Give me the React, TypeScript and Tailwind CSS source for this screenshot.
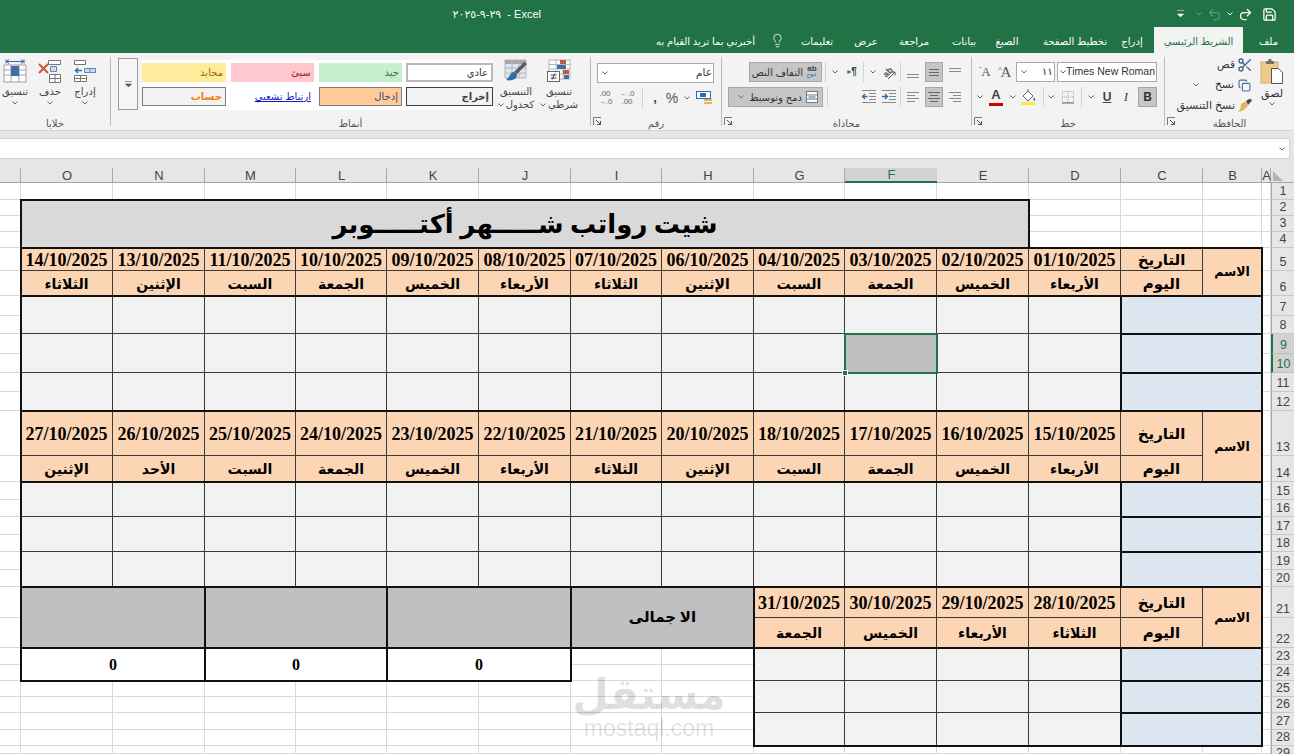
import { Scissors, Copy, Lightbulb, Save, Undo2, Redo2 } from "lucide-react";
import type { ReactNode } from "react";

const Chev = ({ color = "#666" }: { color?: string }) => (
  <svg width="6" height="4" viewBox="0 0 6 4" className="shrink-0">
    <path d="M.5.5 3 3 5.500.5" fill="none" stroke={color} />
  </svg>
);

const Sep = () => <div className="h-[20px] w-px shrink-0 bg-[#d2d2d2]" />;

const Lines = ({ rows, color = "#8a8a8a" }: { rows: number[][]; color?: string }) => (
  <svg width="14" height="14" viewBox="0 0 14 14">
    {rows.map(([x1, x2, y]) => (
      <path key={`${x1}-${y}`} d={`M${x1} ${y}.5H${x2}`} stroke={color} />
    ))}
  </svg>
);

const Launcher = () => (
  <svg width="9" height="9" viewBox="0 0 9 9" className="absolute left-[2px] top-[3px]">
    <path d="M.5 8V.5H8" fill="none" stroke="#777" />
    <path d="M3 3 7.500 7.500M7.500 4v3.500H4" fill="none" stroke="#555" />
  </svg>
);

const Group = ({ w, label, launcher, sep = true, children }: { w: string; label: string; launcher?: boolean; sep?: boolean; children: ReactNode }) => (
  <div className={`flex h-[77px] shrink-0 ${w}`}>
    <div className="flex min-w-0 flex-1 flex-col">
      <div className="h-[61px]">{children}</div>
      <div className="relative flex h-[16px] items-center justify-center pt-[2px] text-[10px] text-[#555]">
        {label}
        {launcher && <Launcher />}
      </div>
    </div>
    {sep && <div className="my-[4px] w-px bg-[#bdbdbd]" />}
  </div>
);

const GridIcon = ({ children }: { children?: ReactNode }) => (
  <svg width="24" height="24" viewBox="0 0 24 24">
    {children}
  </svg>
);

const Clipboard = () => (
  <div className="flex h-[61px] items-start">
    <div className="mr-[4px] flex w-[36px] flex-col items-center pt-[6px]">
      <svg width="24" height="25" viewBox="0 0 24 25">
        <rect x="1" y="3" width="17" height="21" fill="#edcb8a" stroke="#d3ad66" />
        <path d="M6 5V2h2.500V0h3v2H14v3z" fill="#6f6f6f" />
        <path d="M11.500 9.500h7l4 4v11h-11z" fill="#fff" stroke="#555" />
      </svg>
      <span className="mt-[2px] text-[11px] leading-[14px] text-[#333]">لصق</span>
      <span className="mt-[2px]"><Chev /></span>
    </div>
    <div className="mr-[1px] flex flex-col pt-[2px] text-[10.5px] text-[#333]">
      <div className="flex h-[20px] items-center gap-[2px]">
        <Scissors size={16} color="#48618c" />
        <span>قص</span>
      </div>
      <div className="flex h-[20px] items-center gap-[4px] pr-[2px]">
        <Copy size={13} color="#4a6c9b" />
        <span>نسخ</span>
        <span className="mr-[12px]"><Chev /></span>
      </div>
      <div className="flex h-[20px] items-center gap-[2px]">
        <svg width="16" height="15" viewBox="0 0 16 15">
          <path d="M9 3l4-2.500 2 2L11 7z" fill="#4a4a4a" />
          <path d="M8 3.500 11 7c-1 3-5 6-10 7 2-2 3-5 3-8z" fill="#e2b35c" />
        </svg>
        <span className="whitespace-nowrap text-[11px]">نسخ التنسيق</span>
      </div>
    </div>
  </div>
);

const Combo = ({ w, text, font }: { w: string; text: string; font?: boolean }) => (
  <div className={`flex h-[20px] shrink-0 items-center justify-between border border-[#ababab] bg-white pl-[4px] ${w}`}>
    <span dir={font ? "ltr" : "rtl"} className="whitespace-nowrap pr-[1px] text-[10.5px] text-[#333]">{text}</span>
    <Chev />
  </div>
);

const FontGroup = () => (
  <div className="flex flex-col gap-[5px] pt-[9px]">
    <div className="mr-[7px] flex items-center">
      <Combo w="w-[100px]" text="Times New Roman" font />
      <div className="mr-[2px]"><Combo w="w-[39px]" text="١١" /></div>
      <span className="relative mr-[2px] w-[16px] text-center font-['Liberation_Serif'] text-[15px] leading-[20px] text-[#555]">A<span className="absolute left-[0px] top-[-2px] font-['Liberation_Sans'] text-[8px] text-[#2a6fb0]">^</span></span>
      <span className="relative mr-[5px] w-[14px] text-center font-['Liberation_Serif'] text-[13px] leading-[20px] text-[#555]">A<span className="absolute left-0 top-[-2px] font-['Liberation_Sans'] text-[8px] text-[#2a6fb0]">ˇ</span></span>
    </div>
    <div className="mr-[7px] flex h-[20px] items-center">
      <span className="w-[19px] border border-[#a6a6a6] bg-[#c6c6c6] text-center font-['Liberation_Sans'] text-[12px] font-bold leading-[18px] text-[#333]">B</span>
      <span className="mr-[4px] w-[16px] text-center font-['Liberation_Serif'] text-[13px] italic text-[#444]">I</span>
      <span className="mr-[3px] w-[16px] text-center font-['Liberation_Sans'] text-[12px] font-bold text-[#444] underline">U</span>
      <span className="mr-[4px] flex w-[8px] justify-center"><Chev /></span>
      <div className="mr-[5px]"><Sep /></div>
      <svg className="mr-[5px]" width="16" height="16" viewBox="0 0 16 16">
        <rect x="2.500" y="2.500" width="11" height="11" fill="none" stroke="#aaa" strokeDasharray="1 1" />
        <path d="M8 2v12M2 8h12" stroke="#aaa" strokeDasharray="1 1" />
        <path d="M2 14h12" stroke="#666" />
      </svg>
      <span className="mr-[5px] flex w-[8px] justify-center"><Chev /></span>
      <div className="mr-[3px]"><Sep /></div>
      <svg className="mr-[6px]" width="18" height="18" viewBox="0 0 18 18">
        <path d="M4 8l5-5 5 5-5 5z" fill="#fff" stroke="#666" />
        <path d="M9 3V1" stroke="#666" />
        <path d="M15 9c1 2 1.500 3 .5 4-1 0-1.500-2-.5-4z" fill="#555" />
        <rect x="2" y="14" width="14" height="3" fill="#ffe93b" />
      </svg>
      <span className="mr-[2px] flex w-[8px] justify-center"><Chev /></span>
      <div className="relative mr-[4px] flex h-[18px] w-[18px] justify-center">
        <span className="font-['Liberation_Sans'] text-[13px] font-bold leading-[14px] text-[#444]">A</span>
        <div className="absolute bottom-0 h-[3px] w-[14px] bg-[#d00000]" />
      </div>
      <span className="mr-[3px] flex w-[8px] justify-center"><Chev /></span>
    </div>
  </div>
);

const top3 = [[1, 13, 3], [1, 13, 6]];
const mid3 = [[2, 12, 4], [2, 12, 7], [2, 12, 10]];
const bot3 = [[1, 13, 9], [1, 13, 12]];
const leftL = [[1, 13, 2], [1, 9, 5], [1, 13, 8], [1, 9, 11]];
const centerL = [[1, 13, 2], [3, 11, 5], [1, 13, 8], [3, 11, 11]];
const rightL = [[1, 13, 2], [5, 13, 5], [1, 13, 8], [5, 13, 11]];

const Indent = ({ right }: { right?: boolean }) => (
  <svg width="16" height="14" viewBox="0 0 16 14">
    <path d="M8 3.500h7M8 6.500h7M8 9.500h7M1 12.500h14M1 .5h14" stroke="#8a8a8a" />
    <path d={right ? "M1 6.500h5M4 4l2.500 2.500L4 9" : "M6.500 6.500h-5M4 4 1.500 6.500 4 9"} fill="none" stroke="#2a6fb0" strokeWidth="1.300" />
  </svg>
);

const AlignGroup = () => (
  <div className="flex flex-col gap-[5px] pt-[9px]">
    <div className="flex h-[20px] items-center">
      <span className="mr-[7px] flex w-[18px] justify-center"><Lines rows={top3} /></span>
      <span className="mr-[3px] flex h-[20px] w-[18px] items-center justify-center border border-[#a6a6a6] bg-[#c6c6c6]"><Lines rows={mid3} color="#666" /></span>
      <span className="mr-[3px] flex w-[18px] justify-center"><Lines rows={bot3} /></span>
      <div className="mr-[3px]"><Sep /></div>
      <span className="relative mr-[4px] flex h-[16px] w-[16px] items-center justify-center">
        <span className="-rotate-45 text-[9px] font-bold leading-none text-[#555]">ab</span>
        <svg className="absolute inset-0" width="16" height="16" viewBox="0 0 16 16">
          <path d="M8 15 15 8M11.500 8H15v3.500" fill="none" stroke="#555" />
        </svg>
      </span>
      <span className="mr-[3px] flex w-[8px] justify-center"><Chev /></span>
      <div className="mr-[5px]"><Sep /></div>
      <span dir="ltr" className="mr-[3px] flex w-[16px] items-center justify-center text-[10px] font-bold leading-none text-[#444]"><span className="text-[8px] text-[#2a6fb0]">▸</span>¶</span>
      <span className="mr-[5px] flex w-[8px] justify-center"><Chev /></span>
      <div className="mr-[5px]"><Sep /></div>
      <div className="mr-[3px] flex h-[20px] w-[73px] items-center gap-[3px] border border-[#a6a6a6] bg-[#c6c6c6] px-[3px] text-[10px] text-[#333]">
        <span dir="ltr" className="flex w-[12px] shrink-0 flex-col items-center text-[8px] font-bold leading-[7px] text-[#444]">
          ab
          <span className="font-normal text-[#2a6fb0]">c↵</span>
        </span>
        <span className="whitespace-nowrap">التفاف النص</span>
      </div>
    </div>
    <div className="flex h-[20px] items-center">
      <span className="mr-[7px] flex w-[18px] justify-center"><Lines rows={rightL} /></span>
      <span className="mr-[3px] flex h-[20px] w-[18px] items-center justify-center border border-[#a6a6a6] bg-[#c6c6c6]"><Lines rows={centerL} color="#666" /></span>
      <span className="mr-[3px] flex w-[18px] justify-center"><Lines rows={leftL} /></span>
      <div className="mr-[3px]"><Sep /></div>
      <span className="mr-[3px]"><Indent right /></span>
      <span className="mr-[4px]"><Indent /></span>
      <div className="mr-[33px]"><Sep /></div>
      <div className="mr-[4px] flex h-[20px] w-[95px] items-center gap-[3px] border border-[#a6a6a6] bg-[#c6c6c6] px-[3px] text-[10px] text-[#333]">
        <svg width="14" height="14" viewBox="0 0 14 14" className="shrink-0">
          <rect x="1.500" y="1.500" width="11" height="11" fill="#fff" stroke="#777" />
          <path d="M1 5h12M1 9h12" stroke="#777" />
          <path d="M3.500 7h7" stroke="#2a6fb0" />
        </svg>
        <span className="whitespace-nowrap">دمج وتوسيط</span>
        <span className="ml-[6px] mr-auto"><Chev /></span>
      </div>
    </div>
  </div>
);

const NumberGroup = () => (
  <div className="flex flex-col gap-[5px] pt-[10px]">
    <div className="mr-[7px]"><Combo w="w-[117px]" text="عام" /></div>
    <div className="flex h-[20px] items-center">
      <svg className="mr-[8px]" width="18" height="16" viewBox="0 0 18 16">
        <rect x="1.500" y="1.500" width="14" height="7" fill="#fff" stroke="#2a6fb0" />
        <rect x="5" y="3" width="6" height="4" fill="#2a6fb0" />
        <rect x="9" y="9" width="8" height="2" fill="#e5b45a" />
        <rect x="9" y="12" width="8" height="2" fill="#e5b45a" />
      </svg>
      <span className="mr-[4px] flex w-[8px] justify-center"><Chev /></span>
      <span className="mr-[2px] w-[18px] text-center font-['Liberation_Sans'] text-[14px] text-[#555]">%</span>
      <span className="mr-[2px] w-[12px] text-center font-['Liberation_Sans'] text-[13px] font-bold text-[#444]">,</span>
      <div className="mr-[6px]"><Sep /></div>
      <span dir="ltr" className="mr-[6px] w-[18px] text-center font-['Liberation_Sans'] text-[8px] leading-[8px] text-[#666]"><span className="text-[#2a6fb0]">←</span>.0<br />.00</span>
      <span dir="ltr" className="mr-[4px] w-[18px] text-center font-['Liberation_Sans'] text-[8px] leading-[8px] text-[#666]">.00<br /><span className="text-[#2a6fb0]">→</span>.0</span>
    </div>
  </div>
);

const StyleBox = ({ text, cls }: { text: string; cls: string }) => (
  <div className={`flex h-[19px] shrink-0 items-center px-[3px] text-[10px] ${cls}`}>{text}</div>
);

const BigBtn = ({ w, mr, label, second, children }: { w: string; mr: string; label: string; second?: string; children: ReactNode }) => (
  <div className={`flex shrink-0 flex-col items-center pt-[6px] ${w} ${mr}`}>
    {children}
    <span className="mt-[2px] whitespace-nowrap text-[10px] leading-[13px] text-[#444]">{label}</span>
    {second ? (
      <span className="flex items-center gap-[2px] whitespace-nowrap text-[10px] leading-[13px] text-[#444]">{second}<Chev /></span>
    ) : (
      <span className="mt-[3px]"><Chev /></span>
    )}
  </div>
);

const StylesGroup = () => (
  <div className="flex items-start">
    <BigBtn w="w-[44px]" mr="mr-[9px]" label="تنسيق" second="شرطي">
      <svg width="24" height="24" viewBox="0 0 24 24">
        <path d="M2 1h21v19H2zM2 5.500h21M2 10h21M2 15h21M9 1v19M16 1v19" fill="#fff" stroke="#b5b5b5" />
        <rect x="13" y="1" width="6" height="4" fill="#c05a3c" />
        <rect x="10" y="6" width="9" height="4" fill="#3f6fa8" />
        <rect x="16" y="11" width="6" height="4" fill="#c05a3c" />
        <rect x="17" y="16" width="5" height="4" fill="#3f6fa8" />
        <rect x=".5" y="12.500" width="12" height="10" fill="#fff" stroke="#666" />
        <path d="M3.500 16h6M3.500 19h6M8 14.500l-3 6" stroke="#444" fill="none" />
      </svg>
    </BigBtn>
    <BigBtn w="w-[38px]" mr="mr-[2px]" label="التنسيق" second="كجدول">
      <GridIcon>
        <path d="M1 1h21v18H1z" fill="#dfe6f1" stroke="#b5b5b5" />
        <path d="M1 5h21v-4H1z" fill="#a9a9a9" />
        <path d="M1 9h21M1 14h21M8 1v18M15 1v18" stroke="#b5b5b5" />
        <path d="M23 5 13 15l-3-2L20 3z" fill="#5a5a5a" />
        <path d="M10 13c-2 0-3 1-4 3s-2 3-4 5c4 1 8 0 10-2 1-1 1-3 1-4z" fill="#2a6fb0" />
      </GridIcon>
    </BigBtn>
    <div className="mr-[4px] mt-[7px] flex h-[50px] w-[351px] shrink-0 flex-col gap-[5px] bg-white pt-[3px]">
      <div className="flex">
        <StyleBox text="عادي" cls="w-[87px] border-2 border-[#b8b8b8] bg-white text-[#333]" />
        <StyleBox text="جيد" cls="mr-[4px] w-[83px] bg-[#c6efce] text-[#2b7a31]" />
        <StyleBox text="سيئ" cls="mr-[5px] w-[83px] bg-[#ffc7ce] text-[#a8102c]" />
        <StyleBox text="محايد" cls="mr-[5px] w-[84px] bg-[#ffeb9c] text-[#9c6500]" />
      </div>
      <div className="flex">
        <StyleBox text="إخراج" cls="w-[87px] border border-[#3f3f3f] bg-[#f2f2f2] font-bold text-[#3f3f3f]" />
        <StyleBox text="إدخال" cls="mr-[4px] w-[83px] border border-[#7f7f7f] bg-[#ffcc99] text-[#3f3f76]" />
        <StyleBox text="ارتباط تشعبي" cls="mr-[5px] w-[83px] text-[#1a1ac8] underline" />
        <StyleBox text="حساب" cls="mr-[5px] w-[84px] border border-[#7f7f7f] bg-[#f2f2f2] font-bold text-[#fa7d00]" />
      </div>
    </div>
    <div className="mr-[4px] mt-[5px] flex h-[52px] w-[20px] shrink-0 items-center justify-center border border-[#9a9a9a] bg-[#f6f6f6]">
      <svg width="7" height="7" viewBox="0 0 7 7">
        <path d="M0 .5h7M.5 3l3 3 3-3z" fill="#555" stroke="#555" strokeWidth=".6" />
      </svg>
    </div>
  </div>
);

const CellsGroup = () => (
  <div className="flex items-start">
    <BigBtn w="w-[30px]" mr="mr-[10px]" label="إدراج">
      <GridIcon>
        <path d="M1.500 1.500h11v4h-11zM1.500 16.500h12v6h-12zM7.500 16.500v6M1.500 19.500h12" fill="#fff" stroke="#777" />
        <path d="M11.500 9.500h11v4h-11zM17 9.500v4" fill="#cfdcee" stroke="#5f86b8" />
        <path d="M9 11.500H2.500M5 9l-2.500 2.500L5 14" fill="none" stroke="#2a6fb0" strokeWidth="1.500" />
      </GridIcon>
    </BigBtn>
    <BigBtn w="w-[30px]" mr="mr-[5px]" label="حذف">
      <GridIcon>
        <path d="M10.500 1.500h12v4h-12zM11.500 15.500h11v8h-11zM17 15.500v8M11.500 19.500h11" fill="#fff" stroke="#777" />
        <path d="M12.500 7.500h6v5h-6z" fill="#cfdcee" stroke="#5f86b8" />
        <path d="M1 5l9 9M10 5l-9 9" stroke="#d1553b" strokeWidth="2" />
      </GridIcon>
    </BigBtn>
    <BigBtn w="w-[30px]" mr="mr-[5px]" label="تنسيق">
      <GridIcon>
        <path d="M1 6h22v17H1zM1 11h22M1 16h22M8 6v17M16 6v17" fill="#fff" stroke="#a0a0a0" />
        <rect x="8" y="7" width="8" height="10" fill="#3f6fa8" />
        <path d="M3 2.500h18M3 .5v4M21 .5v4M6 .5 3.500 2.500 6 4.500M18 .5l2.500 2-2.500 2" fill="none" stroke="#2a6fb0" />
      </GridIcon>
    </BigBtn>
  </div>
);

const COLS = ["", "O", "N", "M", "L", "K", "J", "I", "H", "G", "F", "E", "D", "C", "B", "A"];
const ROW_NUMS = Array.from({ length: 29 }, (_, i) => i + 1);

// sheet columns as grid lines, left to right
const O = 2, I = 8, G = 10, F = 11, E = 12, D = 13, C = 14, B = 15;

type Cell = { c: number; ce: number; r: number; re: number; cls: string; text?: string };

const HEAD = "justify-center bg-[#fcd5b4] border-r border-b border-[#3a3a3a] font-bold pt-[2px]";

const cells: Cell[] = [];
const frames: { c: number; ce: number; r: number; re: number }[] = [];

function addBlock(top: number, dateEnd: number, dataTop: number, dates: string[], days: string[]) {
  const left = D - dates.length + 1;
  dates.forEach((d, i) => {
    cells.push({ c: D - i, ce: D - i + 1, r: top, re: top, cls: `${HEAD} text-[18px]`, text: `${d}/10/2025` });
    cells.push({ c: D - i, ce: D - i + 1, r: dateEnd, re: dateEnd, cls: `${HEAD} text-[14px]`, text: days[i] });
  });
  cells.push({ c: C, ce: C + 1, r: top, re: top, cls: `${HEAD} text-[15px]`, text: "التاريخ" });
  cells.push({ c: C, ce: C + 1, r: dateEnd, re: dateEnd, cls: `${HEAD} text-[15px]`, text: "اليوم" });
  cells.push({ c: B, ce: B + 1, r: top, re: dateEnd, cls: `${HEAD} text-[12.5px]`, text: "الاسم" });
  frames.push({ c: left, ce: B + 1, r: top, re: dateEnd });
  [0, 2, 4].forEach((o) => {
    const r = dataTop + o;
    for (let col = left; col <= D; col++) {
      cells.push({ c: col, ce: col + 1, r, re: r + 1, cls: "bg-[#f2f2f2] border-r border-b border-[#3a3a3a]" });
    }
    cells.push({ c: C, ce: B + 1, r, re: r + 1, cls: "bg-[#dce6f1]" });
    frames.push({ c: C, ce: B + 1, r, re: r + 1 });
  });
  frames.push({ c: left, ce: B + 1, r: top, re: dataTop + 5 });
}

addBlock(5, 6, 7,
  ["01", "02", "03", "04", "06", "07", "08", "09", "10", "11", "13", "14"],
  ["الأربعاء", "الخميس", "الجمعة", "السبت", "الإثنين", "الثلاثاء", "الأربعاء", "الخميس", "الجمعة", "السبت", "الإثنين", "الثلاثاء"]);
addBlock(13, 14, 15,
  ["15", "16", "17", "18", "20", "21", "22", "23", "24", "25", "26", "27"],
  ["الأربعاء", "الخميس", "الجمعة", "السبت", "الإثنين", "الثلاثاء", "الأربعاء", "الخميس", "الجمعة", "السبت", "الأحد", "الإثنين"]);
addBlock(21, 22, 23,
  ["28", "29", "30", "31"],
  ["الثلاثاء", "الأربعاء", "الخميس", "الجمعة"]);

[O, O + 2, O + 4, I].forEach((c, i) => {
  cells.push({ c, ce: c + 2, r: 21, re: 22, cls: "justify-center bg-[#bfbfbf] text-[15px] font-bold", text: i === 3 ? "الا جمالى" : undefined });
  frames.push({ c, ce: c + 2, r: 21, re: 22 });
  if (i < 3) {
    cells.push({ c, ce: c + 2, r: 23, re: 24, cls: "justify-center bg-white text-[16px] font-bold", text: "0" });
    frames.push({ c, ce: c + 2, r: 23, re: 24 });
  }
});

const area = (c: number, ce: number, r: number, re: number) => ({
  gridColumn: `${c} / ${ce}`,
  gridRow: `${r + 1} / ${re + 2}`,
});

const rowHeadCls = (r: number) => {
  if (r === 9 || r === 10) {
    return "flex items-end justify-center overflow-hidden border-b border-l-2 border-b-[#bcbcbc] border-l-[#217346] bg-[#d2d2d2] font-['Liberation_Sans'] text-[12.5px] leading-[15px] text-[#217346]";
  }
  if (r === 29) {
    return "flex items-start justify-center overflow-hidden border-l border-l-[#a8a8a8] bg-[#e6e6e6] font-['Liberation_Sans'] text-[12.5px] leading-[15px] text-[#444]";
  }
  return "flex items-end justify-center overflow-hidden border-b border-l border-b-[#c8c8c8] border-l-[#a8a8a8] bg-[#e6e6e6] font-['Liberation_Sans'] text-[12.5px] leading-[15px] text-[#444]";
};

const Sheet = () => (
  <div className="grid grid-cols-[21px_92px_92px_91px_91px_92px_92px_91px_92px_91px_92px_92px_92px_82px_59px_9px_23px] grid-rows-[15px_17px_16px_16px_16px_23px_25px_20px_18px_20px_19px_19px_19px_45px_26px_18px_17px_18px_17px_18px_17px_31px_30px_17px_16px_16px_16px_17px_16px_8px] bg-white font-['Liberation_Serif','DejaVu_Sans',serif] text-black">
    {/* column headers */}
    {COLS.map((name, i) => (
      <div
        key={name || "blank"}
        style={{ gridColumn: i + 1, gridRow: 1 }}
        className={
          name === "F"
            ? "flex items-center justify-center border-b-2 border-[#217346] bg-[#d2d2d2] pl-[1px] pt-[1px] font-['Liberation_Sans'] text-[13px] text-[#217346]"
            : "flex items-center justify-center border-b border-r border-[#a8a8a8] bg-[#e6e6e6] pl-[1px] pt-[2px] font-['Liberation_Sans'] text-[13px] text-[#444]"
        }
      >
        {name}
      </div>
    ))}
    <div style={{ gridColumn: 17, gridRow: 1 }} className="flex items-start border-b border-[#a8a8a8] bg-[#e6e6e6] pl-[2px] pt-[3px]">
      <svg width="10" height="10" viewBox="0 0 10 10"><path d="M0 0l10 10H0z" fill="#b4b4b4" /></svg>
    </div>
    {/* blank sheet */}
    {ROW_NUMS.map((r) =>
      COLS.map((_, i) => (
        <div key={`${r}-${i}`} style={{ gridColumn: i + 1, gridRow: r + 1 }} className="border-b border-r border-[#d9d9d9]" />
      ))
    )}
    {/* row headers */}
    {ROW_NUMS.map((r) => (
      <div key={r} style={{ gridColumn: 17, gridRow: r + 1 }} className={rowHeadCls(r)}>
        {r}
      </div>
    ))}
    {/* title */}
    <div style={area(O, E + 1, 2, 4)} className="m-[-1px] flex items-center justify-center border-2 border-[#111] bg-[#d9d9d9] text-[26px] font-bold">
      شيت رواتب شـــــهر أكتـــــوبر
    </div>
    {cells.map((cell) => (
      <div key={`${cell.c}-${cell.r}`} style={area(cell.c, cell.ce, cell.r, cell.re)} className={`flex items-center ${cell.cls}`}>
        {cell.text}
      </div>
    ))}
    {/* selected cell */}
    <div style={area(F, F + 1, 9, 10)} className="relative bg-[#bfbfbf] outline-2 -outline-offset-1 outline-[#217346]">
      <div className="absolute -bottom-[3px] -left-[3px] h-[6px] w-[6px] border border-white bg-[#217346]" />
    </div>
    {frames.map((f) => (
      <div key={`f-${f.c}-${f.ce}-${f.r}-${f.re}`} style={area(f.c, f.ce, f.r, f.re)} className="pointer-events-none m-[-1px] border-2 border-[#111]" />
    ))}
    {/* mostaql watermark */}
    <div style={area(I, G, 24, 29)} className="pointer-events-none flex flex-col items-start pt-[7px] font-['Liberation_Sans','DejaVu_Sans',sans-serif] text-[#000]/12">
      <span className="w-[156px] text-center text-[42px] font-bold leading-[46px]">مستقل</span>
      <span className="w-[156px] text-center text-[23px] leading-[20px]">mostaql.com</span>
    </div>
  </div>
);

const TABS = [
  { label: "ملف", cls: "w-[51px]" },
  { label: "الشريط الرئيسي", cls: "w-[89px] bg-[#f3f3f3] text-[#217346] h-[25px] self-end" },
  { label: "إدراج", cls: "w-[44px]" },
  { label: "تخطيط الصفحة", cls: "w-[70px]" },
  { label: "الصيغ", cls: "w-[40px] mr-[13px]" },
  { label: "بيانات", cls: "w-[36px] mr-[5px]" },
  { label: "مراجعة", cls: "w-[44px] mr-[10px]" },
  { label: "عرض", cls: "w-[34px] mr-[9px]" },
  { label: "تعليمات", cls: "w-[46px] mr-[9px]" },
];

export default function App() {
  return (
    <div className="h-[754px] w-[1294px] overflow-hidden bg-[#e6e6e6] font-['Liberation_Sans','DejaVu_Sans',sans-serif]">
      {/* title bar */}
      <div dir="rtl" className="flex h-[27px] items-center bg-[#217346] pt-[1px] text-white">
        <Save size={15} className="mr-[17px]" />
        <Redo2 size={15} className="mr-[9px]" />
        <span className="mr-[5px]"><Chev color="#fff" /></span>
        <Undo2 size={15} color="#5d9c7c" className="mr-[5px]" />
        <span className="mr-[5px]"><Chev color="#5d9c7c" /></span>
        <svg className="mr-[12px]" width="7" height="8" viewBox="0 0 7 8"><path d="M0 .5h7M.5 4l3 3 3-3z" fill="#fff" stroke="#fff" strokeWidth=".5" /></svg>
        <span dir="ltr" className="mr-[636px] whitespace-nowrap text-[11px] [unicode-bidi:bidi-override]">٢٠٢٥-٩-٢٩ &nbsp;- Excel</span>
      </div>
      {/* tabs */}
      <div dir="rtl" className="flex h-[26px] items-center bg-[#217346] text-[10px] text-white">
        {TABS.map((t) => (
          <span key={t.label} className={`flex h-full shrink-0 items-center justify-center whitespace-nowrap pt-[2px] ${t.cls}`}>{t.label}</span>
        ))}
        <Lightbulb size={15} strokeWidth={1.300} className="mr-[9px] shrink-0" />
        <span className="mr-[15px] whitespace-nowrap pt-[2px] text-[10px]">أخبرني بما تريد القيام به</span>
      </div>
      {/* ribbon */}
      <div dir="rtl" className="flex h-[77px] bg-[#f3f3f3] text-[#333]">
        <Group w="w-[130px]" label="الحافظة" launcher><Clipboard /></Group>
        <Group w="w-[193px]" label="خط" launcher><FontGroup /></Group>
        <Group w="w-[250px]" label="محاذاة" launcher><AlignGroup /></Group>
        <Group w="w-[131px]" label="رقم" launcher><NumberGroup /></Group>
        <Group w="w-[480px]" label="أنماط"><StylesGroup /></Group>
        <Group w="w-[110px]" label="خلايا" sep={false}><CellsGroup /></Group>
      </div>
      {/* formula bar */}
      <div className="border-t border-[#d5d5d5] pb-[9px] pt-[7px]">
        <div className="mr-[4px] flex h-[21px] items-center justify-end border-y border-r border-[#d4d4d4] bg-white pr-[4px]">
          <Chev />
        </div>
      </div>
      <Sheet />
    </div>
  );
}
